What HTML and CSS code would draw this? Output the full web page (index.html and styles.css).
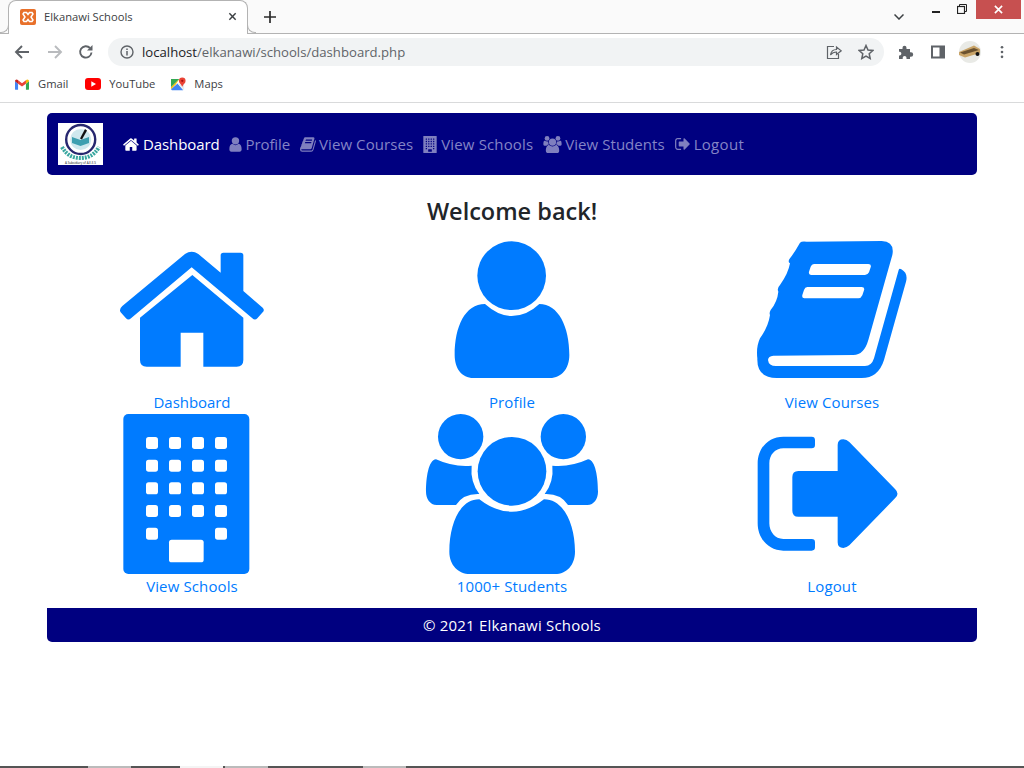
FILE: index.html
```html
<!DOCTYPE html>
<html lang="en">
<head>
<meta charset="utf-8">
<title>Elkanawi Schools</title>
<link rel="stylesheet" href="styles.css">
</head>
<body>
<svg class="defs" width="0" height="0" aria-hidden="true">
  <defs>
    <g id="g-home">
      <path d="M67,228 L255,72 Q275,58 295,72 L362,128 L362,76 Q362,68 370,68 L422,68 Q430,68 430,76 L430,183 L488,233 Q495,240 488,247 L472,265 Q465,272 457,265 L275,112 L93,265 Q85,272 78,265 L62,247 Q56,238 67,228 Z"/>
      <path fill-rule="evenodd" d="M120,263 L277,135 L430,263 L430,390 Q430,410 410,410 L310,410 L310,308 L242,308 L242,410 L140,410 Q120,410 120,390 Z"/>
    </g>
    <g id="g-user">
      <circle cx="245" cy="137" r="103"/>
      <path d="M165,222 Q205,258 245,258 Q290,258 328,222 C385,222 418,290 418,375 C418,415 395,444 360,444 L130,444 C95,444 74,415 74,375 C74,290 105,222 165,222 Z"/>
    </g>
    <g id="g-book">
      <path fill-rule="evenodd" d="M180,38 Q185,33 200,35 L425,33 Q465,35 457,75 L385,330 Q372,375 340,375 L100,377 Q85,378 84,390 Q86,408 108,408 L375,408 Q395,408 402,385 L476,120 Q478,114 484,118 Q505,130 498,155 L432,390 Q415,444 365,444 L110,444 Q50,444 52,385 Q48,350 60,325 Q85,290 90,255 Q87,248 92,240 Q112,215 115,185 Q110,175 120,165 Q145,130 150,100 Q142,95 150,85 Q165,65 180,38 Z M222,102 L385,102 Q395,102 392,112 L387,127 Q383,135 375,135 L213,135 Q205,135 207,125 L212,110 Q215,102 222,102 Z M202,171 L365,171 Q375,171 372,181 L367,196 Q363,205 355,205 L193,205 Q185,205 187,195 L192,180 Q195,171 202,171 Z"/>
    </g>
    <g id="g-building">
      <rect x="70" y="12" width="378" height="480" rx="15"/>
      <g class="hole">
        <rect x="138" y="81" width="36" height="36" rx="8"/><rect x="207" y="81" width="36" height="36" rx="8"/><rect x="276" y="81" width="36" height="36" rx="8"/><rect x="345" y="81" width="36" height="36" rx="8"/>
        <rect x="138" y="149" width="36" height="36" rx="8"/><rect x="207" y="149" width="36" height="36" rx="8"/><rect x="276" y="149" width="36" height="36" rx="8"/><rect x="345" y="149" width="36" height="36" rx="8"/>
        <rect x="138" y="217" width="36" height="36" rx="8"/><rect x="207" y="217" width="36" height="36" rx="8"/><rect x="276" y="217" width="36" height="36" rx="8"/><rect x="345" y="217" width="36" height="36" rx="8"/>
        <rect x="138" y="285" width="36" height="36" rx="8"/><rect x="207" y="285" width="36" height="36" rx="8"/><rect x="276" y="285" width="36" height="36" rx="8"/><rect x="345" y="285" width="36" height="36" rx="8"/>
        <rect x="138" y="353" width="36" height="36" rx="8"/><rect x="345" y="353" width="36" height="36" rx="8"/>
        <rect x="207" y="389" width="104" height="68" rx="8"/>
      </g>
    </g>
    <g id="g-group">
      <circle cx="276" cy="184" r="103"/>
      <circle cx="122" cy="80" r="68"/>
      <circle cx="430" cy="80" r="68"/>
      <path d="M178,268 Q225,305 276,305 Q325,305 372,268 C430,268 465,340 465,425 C465,465 440,492 405,492 L150,492 C115,492 88,465 88,425 C88,340 120,268 178,268 Z"/>
      <path d="M48,148 Q100,172 155,167 Q150,215 178,252 Q130,250 108,285 L50,285 C30,285 18,265 18,245 C18,205 25,150 48,148 Z"/>
      <path d="M504,148 Q452,172 397,167 Q402,215 374,252 Q422,250 444,285 L502,285 C522,285 534,265 534,245 C534,205 527,150 504,148 Z"/>
    </g>
    <g id="g-logout">
      <path d="M215,50 L130,50 C85,50 53,85 53,130 L53,310 C53,355 85,392 130,392 L215,392 Q225,392 225,382 L225,367 Q225,357 215,357 L130,357 C105,357 88,335 88,310 L88,130 C88,105 105,85 130,85 L215,85 Q225,85 225,75 L225,60 Q225,50 215,50 Z"/>
      <path d="M293,153 L293,75 Q293,58 310,58 Q320,58 328,66 L465,207 Q480,221 465,235 L328,376 Q318,384 310,384 Q293,384 293,367 L293,290 L175,290 Q157,290 157,272 L157,171 Q157,153 175,153 Z"/>
    </g>
  </defs>
</svg>

<header class="browser">
  <div class="strip">
    <div class="tab">
      <svg class="favicon" viewBox="0 0 16 16"><rect width="16" height="16" rx="2" fill="#e8702a"/><path d="M4 3.500h2.500L8 5.500l1.500-2H12l1 1.500-2 3 2 3-1 1.500H9.500L8 10.500l-1.500 2H4L3 11l2-3-2-3z" fill="none" stroke="#fff" stroke-width="1.500"/></svg>
      <span class="tab-title">Elkanawi Schools</span>
      <svg class="tab-close" viewBox="0 0 10 10"><path d="M1.500 1.500l7 7M8.500 1.500l-7 7" stroke="#3c4043" stroke-width="1.600"/></svg>
    </div>
    <svg class="new-tab" viewBox="0 0 12 12"><path d="M6 0v12M0 6h12" stroke="#2b2b2b" stroke-width="1.700"/></svg>
    <div class="strip-space"></div>
    <svg class="chevron" viewBox="0 0 10 6"><path d="M.5.500L5 5 9.500.500" fill="none" stroke="#3c4043" stroke-width="1.500"/></svg>
    <span class="win-min"></span>
    <svg class="win-restore" viewBox="0 0 10 10"><path d="M2.500 2.500V.5h7v7h-2" fill="none" stroke="#222" stroke-width="1"/><rect x=".5" y="2.500" width="7" height="7" fill="none" stroke="#222" stroke-width="1.200"/></svg>
    <div class="win-close"><svg viewBox="0 0 10 10"><path d="M1 1l8 8M9 1l-8 8" stroke="#fff" stroke-width="1.800"/></svg></div>
  </div>
  <div class="toolbar">
    <span class="tool tool-first"><svg viewBox="0 0 16 16"><path d="M15 8H2M8 2L2 8l6 6" fill="none" stroke="#5f6368" stroke-width="1.900"/></svg></span>
    <span class="tool"><svg viewBox="0 0 16 16"><path d="M1 8h13M8 2l6 6-6 6" fill="none" stroke="#b9bbbe" stroke-width="1.900"/></svg></span>
    <span class="tool tool-reload"><svg viewBox="0 0 16 16"><path d="M13.500 8.500A5.700 5.700 0 1 1 12 4" fill="none" stroke="#5f6368" stroke-width="1.900"/><path d="M14.500 1v5.500H9z" fill="#5f6368"/></svg></span>
    <div class="address">
      <svg class="info" viewBox="0 0 14 14"><circle cx="7" cy="7" r="6" fill="none" stroke="#5f6368" stroke-width="1.400"/><path d="M7 6v4.500M7 3.500v1.500" stroke="#5f6368" stroke-width="1.500"/></svg>
      <span class="url"><span class="url-host">localhost</span>/elkanawi/schools/dashboard.php</span>
      <span class="address-space"></span>
      <svg class="addr-ico share" viewBox="0 0 16 16"><path d="M8 2.500H1.500v12h11V10" fill="none" stroke="#5f6368" stroke-width="1.200"/><path d="M4.500 11C5 7.500 7.500 5.500 10.500 5.500V3L15.200 6.800 10.500 10.500V8C8 8 6 9 4.500 11Z" fill="none" stroke="#5f6368" stroke-width="1.200"/></svg>
      <svg class="addr-ico star" viewBox="0 0 16 16"><path d="M8 1.500l2 4.500 4.800.5-3.600 3.200 1 4.800L8 12.100 3.800 14.500l1-4.800L1.200 6.500 6 6z" fill="none" stroke="#5f6368" stroke-width="1.500"/></svg>
    </div>
    <span class="tool tool-right"><svg viewBox="0 0 16 16"><path d="M1 5h3.500V3.800a2 2 0 0 1 4 0V5H12v3.300h1a2.200 2.200 0 0 1 0 4.400h-1V15H8.500v-1.200a1.900 1.900 0 0 0-3.800 0V15H1v-3.500h1a2 2 0 0 0 0-3.800H1z" fill="#5f6368"/></svg></span>
    <span class="tool"><svg viewBox="0 0 16 16"><path fill-rule="evenodd" d="M1 1.500h14v13H1z M3 3.500v9h6.500v-9z" fill="#5f6368"/></svg></span>
    <span class="tool"><svg class="avatar" viewBox="0 0 22 22"><circle cx="11" cy="11" r="11" fill="#e9eae6"/><path d="M0 11L15 4.500l6 3.500v4L6 16.500 0 14z" fill="#c9a468"/><path d="M1 11.500l14-4.500 5 2-15 4.500z" fill="#6b5230"/><circle cx="18.500" cy="13" r="2" fill="#111"/></svg></span>
    <span class="tool"><svg class="dots" viewBox="0 0 4 16"><circle cx="2" cy="2.500" r="1.500" fill="#5f6368"/><circle cx="2" cy="8" r="1.500" fill="#5f6368"/><circle cx="2" cy="13.500" r="1.500" fill="#5f6368"/></svg></span>
  </div>
  <div class="bookmarks">
    <span class="bm bm-gmail">
      <svg viewBox="0 0 16 12"><path d="M0 2v9a1 1 0 0 0 1 1h2.500V5z" fill="#4285f4"/><path d="M16 2v9a1 1 0 0 1-1 1h-2.500V5z" fill="#34a853"/><path d="M3.500 5V1L8 4.500 12.500 1v4L8 8.300z" fill="#ea4335"/><path d="M0 2.200C0 .5 2 -.5 3.500 1v4z" fill="#c5221f"/><path d="M16 2.200C16 .5 14 -.5 12.500 1v4z" fill="#fbbc04"/></svg>
      Gmail
    </span>
    <span class="bm bm-yt">
      <svg viewBox="0 0 16 12"><rect width="16" height="12" rx="3" fill="#f00"/><path d="M6.300 3.300L11 6 6.300 8.700z" fill="#fff"/></svg>
      YouTube
    </span>
    <span class="bm bm-maps">
      <svg viewBox="0 0 16 16"><path d="M0 2h9L0 11z" fill="#34a853"/><path d="M9 2l-9 9v2l5-5z" fill="#fbbc04"/><path d="M0 13l7-6 6 7H1z" fill="#4285f4"/><path d="M7 7l3 3 4 4V8z" fill="#e8eaed"/><circle cx="12" cy="4" r="3.500" fill="#ea4335"/><circle cx="12" cy="4" r="1.200" fill="#a50e0e"/><path d="M9.500 6.200L12 10.500l2.500-4.300z" fill="#ea4335"/></svg>
      Maps
    </span>
  </div>
</header>

<div class="container">
  <nav class="navbar">
    <svg class="logo" viewBox="0 0 45 42">
      <rect width="45" height="42" fill="#fff"/>
      <circle cx="22.700" cy="16.500" r="14.500" fill="#fff" stroke="#27276f" stroke-width="2.400"/>
      <circle cx="22.700" cy="16.500" r="10.500" fill="#cfe8ee"/>
      <path d="M14 20l8.500 3 8.500-3v-6l-8.500 3-8.500-3z" fill="#3d9fb0"/>
      <path d="M27 6l2 1.500-5 9-2-1z" fill="#111"/>
      <path d="M4 24C9 33 16 35 22.500 35S36 33 41 24" fill="none" stroke="#3aa7a0" stroke-width="4" stroke-dasharray="2 1"/>
      <text class="logo-text" x="22.500" y="40.500" text-anchor="middle">A Subsidiary of A.E.E.S</text>
    </svg>
    <a class="nav-link nl-dash active"><svg class="nav-ico ni-home" viewBox="56 60 440 352"><use href="#g-home"/></svg>Dashboard</a>
    <a class="nav-link nl-prof"><svg class="nav-ico ni-user" viewBox="74 30 344 420"><use href="#g-user"/></svg>Profile</a>
    <a class="nav-link nl-courses"><svg class="nav-ico ni-book" viewBox="50 30 452 420"><use href="#g-book"/></svg>View Courses</a>
    <a class="nav-link nl-schools"><svg class="nav-ico ni-building" viewBox="70 12 378 480"><use href="#g-building"/></svg>View Schools</a>
    <a class="nav-link nl-students"><svg class="nav-ico ni-group" viewBox="18 12 516 480"><use href="#g-group"/></svg>View Students</a>
    <a class="nav-link nl-logout"><svg class="nav-ico ni-logout" viewBox="53 50 424 342"><use href="#g-logout"/></svg>Logout</a>
  </nav>

  <h3 class="welcome">Welcome back!</h3>

  <div class="tiles">
    <a class="tile tile-tight"><svg class="tile-ico" viewBox="36 0 480 480"><use href="#g-home"/></svg><span>Dashboard</span></a>
    <a class="tile"><svg class="tile-ico" viewBox="6 0 480 480"><use href="#g-user"/></svg><span>Profile</span></a>
    <a class="tile"><svg class="tile-ico" viewBox="36 0 480 480"><use href="#g-book"/></svg><span>View Courses</span></a>
    <a class="tile"><svg class="tile-ico" viewBox="36 12 480 480"><use href="#g-building"/></svg><span>View Schools</span></a>
    <a class="tile"><svg class="tile-ico" viewBox="36 12 480 480"><use href="#g-group"/></svg><span>1000+ Students</span></a>
    <a class="tile"><svg class="tile-ico" viewBox="36 -18 480 480"><use href="#g-logout"/></svg><span>Logout</span></a>
  </div>

  <footer class="site-footer">© 2021 Elkanawi Schools</footer>
</div>

<div class="taskbar">
  <span class="task task-a"></span><span class="task task-b"></span><span class="task task-c"></span><span class="task task-d"></span>
</div>
</body>
</html>
```

FILE: styles.css
```css
* { box-sizing: border-box; }
html, body { margin: 0; padding: 0; height: 768px; overflow: hidden; }
body {
  display: flex;
  flex-direction: column;
  background: #fff;
  color: #212529;
  font-family: "Open Sans", "Liberation Sans", sans-serif;
  font-size: 15px;
  line-height: 24px;
  --hole: #fff;
}
.defs { position: absolute; }

/* Browser frame */
.browser { flex: none; height: 103px; border-bottom: 1px solid #d9dadb; }
.strip {
  display: flex;
  align-items: flex-start;
  height: 34px;
  padding-left: 8px;
  background: #fafafa;
  border-bottom: 1px solid #b3b3b3;
}
.tab {
  position: relative;
  display: flex;
  align-items: center;
  width: 240px;
  height: 34px;
  padding: 0 10px 2px 11px;
  background: #fff;
  border: 1px solid #b3b3b3;
  border-bottom: 0;
  border-radius: 8px 8px 0 0;
}
.tab::before, .tab::after {
  content: "";
  position: absolute;
  bottom: 1px;
  width: 8px;
  height: 8px;
  border-bottom: 1px solid #b3b3b3;
}
.tab::before { left: -9px; border-right: 1px solid #b3b3b3; border-bottom-right-radius: 8px; }
.tab::after { right: -9px; border-left: 1px solid #b3b3b3; border-bottom-left-radius: 8px; }
.favicon { width: 16px; height: 16px; flex: none; }
.tab-title { margin-left: 8px; font-size: 11.2px; color: #3c4043; flex: 1; }
.tab-close { width: 9px; height: 9px; flex: none; }
.new-tab { width: 12px; height: 12px; margin: 11px 0 0 16px; flex: none; }
.strip-space { flex: 1; }
.chevron { width: 10px; height: 6px; margin-top: 14px; flex: none; }
.win-min { width: 8px; height: 2px; margin: 11px 0 0 28px; background: #222; flex: none; }
.win-restore { width: 10px; height: 10px; margin: 4px 0 0 17px; flex: none; }
.win-close {
  display: flex;
  align-items: center;
  justify-content: center;
  width: 45px;
  height: 19px;
  margin: 0 3px 0 9px;
  background: #c75050;
  flex: none;
}
.win-close svg { width: 9px; height: 9px; }

.toolbar { display: flex; align-items: center; height: 34px; padding: 2px 6px 0 0; background: #fff; }
.tool { display: flex; align-items: center; justify-content: center; width: 32px; height: 32px; flex: none; }
.tool svg { width: 16px; height: 16px; }
.tool-first { margin-left: 6px; margin-right: 1px; }
.tool-reload { margin-left: -1px; }
.tool svg.avatar { width: 22px; height: 22px; }
.tool svg.dots { width: 4px; height: 14px; }
.tool-right { margin-left: 6px; }
.address {
  display: flex;
  align-items: center;
  flex: 1;
  height: 28px;
  margin-left: 6px;
  padding: 0 10px 0 12px;
  background: #f1f3f4;
  border-radius: 14px;
}
.info { width: 14px; height: 14px; flex: none; }
.url { margin-left: 8px; font-size: 13.15px; color: #5f6368; }
.url-host { color: #202124; }
.address-space { flex: 1; }
.addr-ico { width: 16px; height: 16px; flex: none; }
.share { margin-right: 16px; }

.bookmarks { display: flex; align-items: center; height: 34px; padding: 0 0 2px 15px; background: #fff; }
.bm { display: flex; align-items: center; font-size: 11.2px; color: #3c4043; }
.bm svg { flex: none; }
.bm-gmail svg { width: 14px; height: 11px; margin-right: 9px; }
.bm-gmail { margin-right: 17px; }
.bm-yt svg { width: 16px; height: 12px; margin-right: 8px; }
.bm-yt { margin-right: 16px; }
.bm-maps svg { width: 15px; height: 15px; margin-right: 8px; }

/* Page */
.container { flex: none; width: 930px; margin: 0 auto; }
.navbar {
  display: flex;
  align-items: center;
  height: 62px;
  margin-top: 10px;
  padding: 0 11px;
  background: #000080;
  border-radius: 5px;
  --hole: #000080;
}
.logo { width: 45px; height: 42px; margin-right: 15px; flex: none; }
.logo-text { font-size: 3px; fill: #111; }
.nav-link {
  display: flex;
  align-items: center;
  padding: 0 5px;
  color: #8484c6;
  fill: #7f7fbf;
  white-space: nowrap;
}
.nav-link.active { color: #fff; fill: #fff; }
.nl-dash { letter-spacing: -0.1px; margin-right: -1px; }
.nl-prof { letter-spacing: -0.1px; }
.nl-courses { letter-spacing: 0.08px; }
.nl-schools { letter-spacing: 0.15px; }
.nl-students { letter-spacing: 0.05px; }
.nl-logout { letter-spacing: 0.3px; }
.nav-ico { margin-right: 4px; flex: none; }
.ni-home { width: 16px; height: 13px; }
.ni-user { width: 13px; height: 15px; }
.ni-book { width: 16px; height: 15px; margin-right: 3px; }
.ni-building { width: 14px; height: 17px; }
.ni-group { width: 19px; height: 17px; margin-right: 3px; }
.ni-logout { width: 15px; height: 12px; }
.hole { fill: var(--hole); }

.welcome {
  margin: 0;
  padding: 20px 0 3px;
  text-align: center;
  font-size: 23.5px;
  line-height: 32px;
  font-weight: 600;
}
.tiles {
  display: grid;
  grid-template-columns: repeat(3, 320px);
  margin: 0 -15px;
}
.tile {
  display: flex;
  flex-direction: column;
  align-items: center;
  color: #007bff;
  fill: #007bff;
  letter-spacing: 0.12px;
  text-decoration: none;
}
.tile-tight { letter-spacing: -0.05px; }
.tile-ico { display: block; width: 160px; height: 160px; overflow: visible; }
.site-footer {
  margin-top: 10px;
  height: 34px;
  line-height: 34px;
  text-align: center;
  letter-spacing: 0.2px;
  color: #fff;
  background: #000080;
  border-radius: 0 0 5px 5px;
}

.taskbar {
  display: flex;
  flex: none;
  height: 2px;
  margin-top: auto;
  padding-left: 88px;
  background: #555;
}
.task { height: 2px; width: 43px; background: #bbb; }
.task-a { margin-right: 49px; }
.task-b { margin-right: 2px; background: #f4f4f4; }
.task-c { margin-right: 95px; }
```
